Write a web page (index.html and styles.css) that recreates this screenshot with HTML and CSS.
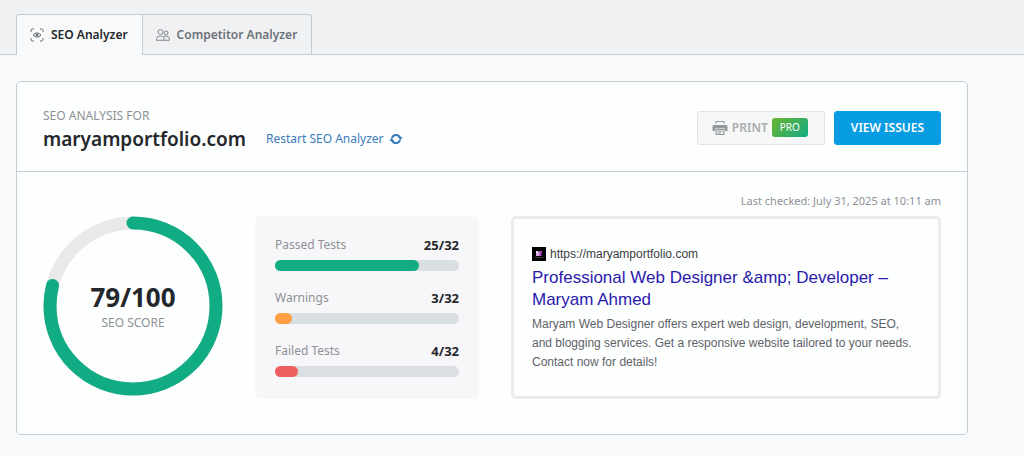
FILE: index.html
```html
<!DOCTYPE html>
<html lang="en">
<head>
    <meta charset="utf-8">
    <meta name="viewport" content="width=device-width, initial-scale=1">
    <title>SEO Analyzer</title>
    <link rel="stylesheet" href="styles.css">
</head>
<body>

<nav class="tabs">
    <a class="tab active" href="#seo">
        <svg class="tab-icon" viewBox="0 0 14 14" fill="none" stroke="currentColor">
            <path d="M1 4V2.500Q1 1 2.500 1H4M10 1h1.500Q13 1 13 2.500V4M13 10v1.500Q13 13 11.500 13H10M4 13H2.500Q1 13 1 11.500V10"/>
            <path d="M3 7.200Q7 2.600 11 7.200Q7 11 3 7.200Z"/>
            <circle cx="7" cy="7" r="1" fill="currentColor"/>
        </svg>
        SEO Analyzer
    </a>
    <a class="tab" href="#competitor">
        <svg class="tab-icon" viewBox="0 0 14 14" fill="none" stroke="currentColor">
            <circle cx="4.500" cy="4" r="2.500"/>
            <circle cx="10" cy="5" r="2"/>
            <path d="M.6 12.300V10.800Q.6 8 4.500 8T8 10.800V12.300ZM8 8.500Q13.400 7.500 13.400 11V12.300H8"/>
        </svg>
        Competitor Analyzer
    </a>
</nav>

<main class="card">
    <header class="card-header">
        <div class="site">
            <div class="caption">SEO ANALYSIS FOR</div>
            <div class="site-row">
                <h1>maryamportfolio.com</h1>
                <a class="restart" href="#restart">Restart SEO Analyzer
                    <svg class="restart-icon" viewBox="0 0 14 12">
                        <path d="M3 5A4.200 4.200 0 0 1 10.900 4.500M11 7A4.200 4.200 0 0 1 3.100 7.500" fill="none" stroke="currentColor" stroke-width="2"/>
                        <path d="M8.800 4H13.600L11.400 7.200ZM.4 8H5.200L2.600 4.800Z" fill="currentColor"/>
                    </svg>
                </a>
            </div>
        </div>
        <div class="actions">
            <button class="button print" type="button">
                <svg class="print-icon" viewBox="0 0 16 16" fill="currentColor">
                    <path d="M3.500 1h9v3h-1V2h-7v2h-1zM2 5h12q1.500 0 1.500 1.500V11H13V8.500H3V11H.5V6.500Q.5 5 2 5z"/>
                    <path d="M3.500 9h9v6h-9zM4.700 10v4h6.600v-4zM5.500 10.700h5v1h-5zM5.500 12.400h3.500v1H5.500z" fill-rule="evenodd"/>
                </svg>
                PRINT <span class="pro">PRO</span>
            </button>
            <button class="button primary" type="button">VIEW ISSUES</button>
        </div>
    </header>

    <div class="checked">Last checked: July 31, 2025 at 10:11 am</div>

    <div class="results">
        <div class="score">
            <svg class="ring" viewBox="0 0 180 180" fill="none" stroke-width="13">
                <circle cx="90" cy="90" r="83" stroke="#e9e9e9"/>
                <circle cx="90" cy="90" r="83" stroke="#12ac84" stroke-linecap="round" pathLength="100" stroke-dasharray="79 100" transform="rotate(-90 90 90)"/>
            </svg>
            <div class="score-text">
                <strong>79/100</strong>
                <span class="caption">SEO SCORE</span>
            </div>
        </div>

        <div class="tests">
            <div class="test">
                <div class="test-label">Passed Tests <strong>25/32</strong></div>
                <div class="bar"><div class="fill passed" style="width: 78.125%"></div></div>
            </div>
            <div class="test">
                <div class="test-label">Warnings <strong>3/32</strong></div>
                <div class="bar"><div class="fill warning" style="width: 9.375%"></div></div>
            </div>
            <div class="test">
                <div class="test-label">Failed Tests <strong>4/32</strong></div>
                <div class="bar"><div class="fill failed" style="width: 12.5%"></div></div>
            </div>
        </div>

        <div class="serp">
            <div class="serp-url">
                <svg class="favicon" viewBox="0 0 14 14">
                    <path fill="#000" d="M0 0h14v14H0z"/>
                    <path fill="#eadcf0" d="M4 4h2l1 2 1-2h1v5H8V7L7 8 6 7v2H4z"/>
                    <path fill="#d9a8e2" d="M4 6h4v3H4z"/>
                    <path fill="#b040c8" d="M7 4h3v2L9 7l1 2H7l1-2z"/>
                    <path fill="#443048" d="M3 10h8v1H3z"/>
                </svg>
                https://maryamportfolio.com
            </div>
            <a class="serp-title" href="https://maryamportfolio.com">Professional Web Designer &amp;amp; Developer – Maryam Ahmed</a>
            <p class="serp-text">Maryam Web Designer offers expert web design, development, SEO, and blogging services. Get a responsive website tailored to your needs. Contact now for details!</p>
        </div>
    </div>
</main>

</body>
</html>
```
FILE: styles.css
```css
* {
    box-sizing: border-box;
}

body {
    margin: 0;
    background: #f8f9fa;
    color: #24272b;
    font: 12px/18px "Segoe UI", "Noto Sans", "Open Sans", sans-serif;
}

a {
    text-decoration: none;
}

.tabs {
    display: flex;
    padding: 14px 16px 0;
    background: #f0f1f3;
    border-bottom: 1px solid #c5cbd6;
}

.tab {
    display: flex;
    align-items: center;
    gap: 7px;
    height: 40px;
    padding: 0 14px 0 13px;
    border: 1px solid #c5cbd6;
    border-left: 0;
    border-bottom: 0;
    border-top-right-radius: 3px;
    color: #6d7278;
    font-weight: 600;
}

.tab.active {
    margin-bottom: -1px;
    height: 41px;
    border-left: 1px solid #c5cbd6;
    border-radius: 3px 0 0 0;
    background: #f8f9fa;
    color: #24272b;
}

.tab-icon {
    width: 14px;
    height: 14px;
    color: #85898e;
}

.tab.active .tab-icon {
    color: #65696e;
}

.card {
    margin: 26px 56px 22px 16px;
    background: #fdfefe;
    border: 1px solid #c5cbd6;
    border-radius: 5px;
}

.card-header {
    display: flex;
    justify-content: space-between;
    align-items: center;
    height: 90px;
    padding: 2px 26px 0;
    border-bottom: 1px solid #c5cbd6;
}

.site {
    padding-top: 4px;
}

.caption {
    color: #8d9095;
}

.site-row {
    display: flex;
    align-items: center;
    gap: 20px;
}

h1 {
    margin: 0;
    font-size: 19px;
    line-height: 28px;
    font-weight: 600;
}

.restart {
    display: flex;
    align-items: center;
    gap: 5px;
    color: #3b7bbd;
}

.restart-icon {
    width: 14px;
    height: 12px;
}

.actions {
    display: flex;
    gap: 9px;
}

.button {
    display: flex;
    align-items: center;
    gap: 5px;
    height: 34px;
    padding: 0 16px;
    border: 1px solid #089ce3;
    border-radius: 3px;
    font: inherit;
    font-weight: 600;
}

.print {
    padding: 0 16px 0 14px;
    gap: 4px;
    background: #f6f7f7;
    border-color: #e0e2e4;
    color: #a9acb0;
}

.print-icon {
    width: 16px;
    height: 16px;
    color: #94979b;
}

.pro {
    padding: 0 8px;
    border-radius: 3px;
    background: linear-gradient(135deg, #6bb32e, #12ac84);
    color: #fff;
    font-size: 10px;
    line-height: 19px;
    font-weight: 400;
}

.primary {
    background: #089ce3;
    color: #fff;
}

.checked {
    padding: 20px 26px 6px;
    color: #8d9095;
    font-size: 11px;
    text-align: right;
}

.results {
    display: grid;
    grid-template-columns: 180px 224px 1fr;
    gap: 32px;
    padding: 0 26px 35px;
}

.score {
    display: grid;
    align-content: start;
    align-items: center;
    justify-items: center;
}

.score > * {
    grid-area: 1 / 1;
}

.ring {
    width: 180px;
    height: 180px;
}

.score-text {
    display: flex;
    flex-direction: column;
    align-items: center;
}

.score-text strong {
    font-size: 26px;
    line-height: 34px;
}

.tests {
    display: flex;
    flex-direction: column;
    gap: 18px;
    padding: 20px;
    background: #f7f7fa;
    border-radius: 6px;
}

.test-label {
    display: flex;
    justify-content: space-between;
    margin-bottom: 6px;
    line-height: 18px;
    color: #8d9095;
}

.test-label strong {
    color: #24272b;
    font-size: 13px;
}

.bar {
    height: 11px;
    border-radius: 6px;
    background: #dadfe3;
}

.fill {
    height: 100%;
    border-radius: 6px;
}

.passed {
    background: #12ac84;
}

.warning {
    background: #ff9f43;
}

.failed {
    background: #ee5e5e;
}

.serp {
    padding: 26px 18px 24px;
    border: 3px solid #ebebeb;
    border-radius: 5px;
    font-family: "Liberation Sans", Arial, sans-serif;
}

.serp-url {
    display: flex;
    align-items: center;
    gap: 4px;
    color: #3a3d40;
}

.favicon {
    width: 14px;
    height: 14px;
}

.serp-title {
    display: block;
    margin: 4px 0;
    color: #2a1aad;
    font-size: 17px;
    line-height: 22px;
}

.serp-text {
    margin: 0;
    color: #5f6368;
    line-height: 19px;
}
```
